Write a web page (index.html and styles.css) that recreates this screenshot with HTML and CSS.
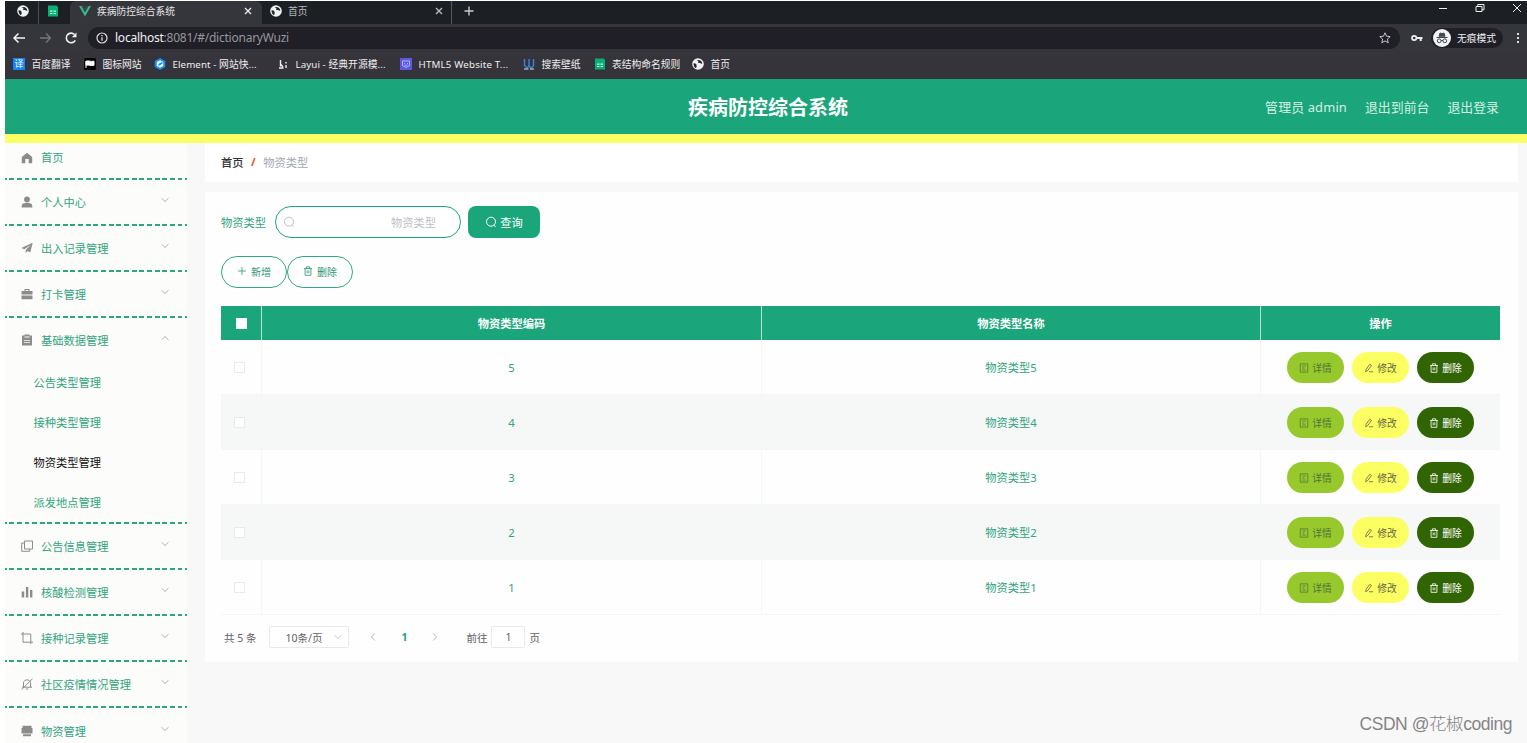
FILE: index.html
```html
<!DOCTYPE html>
<html lang="zh-CN">
<head>
<meta charset="utf-8">
<title>疾病防控综合系统</title>
<link rel="stylesheet" href="styles.css">
</head>
<body>
<svg class="defs" aria-hidden="true">
  <symbol id="globe" viewBox="0 0 12 12"><circle cx="6" cy="6" r="5.8" fill="#f1f2f3"/><path d="M1.600 5.300C3 5 4.600 5.900 4.600 7.200 5 8.600 4.200 9.200 4 10.300 2.300 9.400 1.300 7.400 1.600 5.300Z M5.300 2C8 1.400 10.200 3.400 10.300 5.500 9 6.400 8.500 4.900 7.200 5.100 5.900 5 5.700 4.200 6.500 3.700 6.400 2.800 5.200 3.200 5.300 2Z" fill="#26282c"/></symbol>
  <symbol id="sheet" viewBox="0 0 12 12"><path d="M1 .5h8.500L11 2v9.500H1z" fill="#08b073"/><path d="M3 6.200h2.500M6.500 6.200H9M3 8.500h2.500M6.500 8.500H9" stroke="#c6f4e2" stroke-width="1.200"/></symbol>
  <symbol id="cross" viewBox="0 0 10 10"><path d="M2 2l6 6M8 2l-6 6" stroke="currentColor" stroke-width="1.400" fill="none"/></symbol>
  <symbol id="search" viewBox="0 0 12 12"><circle cx="6" cy="5.700" r="4.500" fill="none" stroke="currentColor"/><path d="M9 9.200l1.500 1.600" stroke="currentColor"/></symbol>
  <symbol id="trash" viewBox="0 0 12 12"><path d="M1.200 3h9.600M4 2.800V1h4v1.800M2.500 3.300v7.900h7v-7.900M5 5.300v3.500M7 5.300v3.500" fill="none" stroke="currentColor"/></symbol>
  <symbol id="doc" viewBox="0 0 12 12"><path d="M1.500 1h9v10h-9zM4 3.500h4M4 6h2.500M4 8.500h4" fill="none" stroke="currentColor" stroke-width=".9"/></symbol>
  <symbol id="pen" viewBox="0 0 12 12"><path d="M2 10.500l.5-3L7 1.500l2 1.500-4.500 6-2.500 1.500M6 10.500h5" fill="none" stroke="currentColor"/></symbol>
  <symbol id="down" viewBox="0 0 10 10"><path d="M1.500 3.200L5 6.500l3.500-3.300" fill="none" stroke="currentColor" stroke-width=".9"/></symbol>
</svg>
<div class="screen">
  <div class="tabs">
    <div class="tab pin"><svg class="i12"><use href="#globe"/></svg></div>
    <div class="tab pin2"><svg class="i12"><use href="#sheet"/></svg></div>
    <div class="tab active"><svg class="i12" viewBox="0 0 12 12"><path d="M0 1h2.500L6 7.200 9.500 1H12L6 11.400z" fill="#41b883"/><path d="M2.500 1h2.200L6 3.300 7.300 1h2.200L6 7.200z" fill="#35495e"/></svg><span>疾病防控综合系统</span><svg class="i10"><use href="#cross"/></svg></div>
    <div class="tab second"><svg class="i12"><use href="#globe"/></svg><span>首页</span><svg class="i10"><use href="#cross"/></svg></div>
    <svg class="plus" viewBox="0 0 10 10"><path d="M5 .5v9M.5 5h9" stroke="#c8cbcc" stroke-width="1.400"/></svg>
    <div class="win">
      <svg class="i10" viewBox="0 0 10 10"><path d="M1 5.500h8" stroke="#eee"/></svg>
      <svg class="i10" viewBox="0 0 10 10"><path d="M1 3.500h6v5H1zM2.800 3.500v-2H9v5.300H7" fill="none" stroke="#eee"/></svg>
      <svg class="i10" viewBox="0 0 10 10"><path d="M1 1l8 8M9 1L1 9" stroke="#eee"/></svg>
    </div>
  </div>
  <div class="tools">
    <svg class="nav" viewBox="0 0 14 14"><path d="M13 7H2M6.500 2.500L2 7l4.500 4.500" fill="none" stroke="#f2f2f2" stroke-width="1.500"/></svg>
    <svg class="nav" viewBox="0 0 14 14"><path d="M2 7h10M8 2.500L12.500 7 8 11.500" fill="none" stroke="#77777a" stroke-width="1.300"/></svg>
    <svg class="nav" viewBox="0 0 14 14"><path d="M11.300 9.300A4.800 4.800 0 1 1 10.500 3.500" fill="none" stroke="#f2f2f2" stroke-width="1.600"/><path d="M12.500 1.500v4.700H7.800z" fill="#f2f2f2"/></svg>
    <div class="address">
      <svg class="i12" viewBox="0 0 12 12"><circle cx="6" cy="6" r="5" fill="none" stroke="#ddd" stroke-width="1.200"/><path d="M6 5.200v3.600M6 3v1.200" stroke="#ddd" stroke-width="1.300"/></svg>
      <span class="url"><b>localhost</b>:8081/#/dictionaryWuzi</span>
      <svg class="i12 star" viewBox="0 0 12 12"><path d="M6 .8l1.500 3.400 3.700.4-2.800 2.500.8 3.700L6 8.900l-3.200 1.900.8-3.700L.8 4.600l3.700-.4z" fill="none" stroke="#c5c5c8"/></svg>
    </div>
    <svg class="i12 key" viewBox="0 0 12 12"><circle cx="3.200" cy="6" r="2.200" fill="none" stroke="#eee" stroke-width="1.700"/><path d="M5.500 6h6M9.700 6v3" stroke="#eee" stroke-width="2"/></svg>
    <div class="incog"><svg viewBox="0 0 18 18"><circle cx="9" cy="9" r="9" fill="#f1f2f5"/><path d="M3.500 8.500h11M6 7.300L7 4l2 .6L11 4l1 3.300z" fill="#44474d" stroke="#44474d"/><circle cx="6.200" cy="11.800" r="1.900" fill="none" stroke="#44474d"/><circle cx="11.800" cy="11.800" r="1.900" fill="none" stroke="#44474d"/><path d="M8 11.500h2" stroke="#44474d"/></svg><span>无痕模式</span></div>
    <svg class="dots" viewBox="0 0 4 12"><path d="M1 1h2v2H1zM1 5h2v2H1zM1 9h2v2H1z" fill="#ddd"/></svg>
  </div>
  <div class="marks">
    <div class="mark m1"><i class="yi">译</i><span>百度翻译</span></div>
    <div class="mark m2"><svg class="i12" viewBox="0 0 12 12"><rect width="12" height="12" rx="1.500" fill="#050505"/><path d="M2 3v7M2 3.200c3-1 4 .8 8 0v4c-4 1-5-.8-8 0z" fill="#fff" stroke="#fff"/></svg><span>图标网站</span></div>
    <div class="mark m3"><svg class="i12" viewBox="0 0 12 12"><path d="M6 0l5.300 3v6L6 12 .7 9V3z" fill="#168bec"/><path d="M6 2.200L9.300 4v4L6 9.800 2.700 8V4z" fill="#e9f5ff"/><path d="M4.500 6l4-2.300v2L4.500 8z" fill="#168bec"/></svg><span>Element - 网站快...</span></div>
    <div class="mark m4"><svg class="i12" viewBox="0 0 12 12"><path d="M3.500 2v6.500M2 10h4.500M3.500 6l2.500 3M9 4v1.500M9 7v3" fill="none" stroke="#eee" stroke-width="1.400"/></svg><span>Layui - 经典开源模...</span></div>
    <div class="mark m5"><svg class="i12" viewBox="0 0 12 12"><rect width="12" height="12" fill="#5c58e4"/><path d="M2.500 3h7v4.500L6 9.500 2.500 7.500zM4.500 5v1M7.500 5v1M4.500 7.200h3" fill="none" stroke="#c7c9ff" stroke-width=".8"/></svg><span>HTML5 Website T...</span></div>
    <div class="mark m6"><svg class="i12" viewBox="0 0 12 12"><path d="M1.500 1v6.500L4 10l2-2V1M6 8l2 2 2.500-2V1" fill="none" stroke="#3b83d7" stroke-width="1.400"/><path d="M1 11h4.500M7 11h4" stroke="#ddd"/></svg><span>搜索壁纸</span></div>
    <div class="mark m7"><svg class="i12"><use href="#sheet"/></svg><span>表结构命名规则</span></div>
    <div class="mark"><svg class="i12"><use href="#globe"/></svg><span>首页</span></div>
  </div>

  <header class="header">
    <h1>疾病防控综合系统</h1>
    <div class="user"><span>管理员 admin</span><span>退出到前台</span><span>退出登录</span></div>
  </header>

  <div class="body">
    <nav class="side">
      <div class="item home"><svg viewBox="0 0 12 12"><path d="M6 .7L.8 5v6.300H4.300V7h3.400v4.300h3.500V5z"/></svg><span>首页</span></div>
      <div class="item"><svg viewBox="0 0 12 12"><circle cx="6" cy="3.500" r="2.900"/><path d="M.7 11.500V9.700C1 7.700 2.500 7 4.500 7h3c2 0 3.500.7 3.800 2.700v1.800z"/></svg><span>个人中心</span><svg class="arr"><use href="#down"/></svg></div>
      <div class="item"><svg viewBox="0 0 12 12"><path d="M11.700.8L.3 6l3 1.300L10 2.800 4.700 8v3.300l1.800-2.200 2.700 1.300z"/></svg><span>出入记录管理</span><svg class="arr"><use href="#down"/></svg></div>
      <div class="item"><svg viewBox="0 0 12 12"><path d="M3.500 3V1h5v2h3v3.500H.5V3zM4.600 3h2.800V2H4.600zM.5 7.500h11v3.800H.5z" fill-rule="evenodd"/></svg><span>打卡管理</span><svg class="arr"><use href="#down"/></svg></div>
      <div class="item open"><svg viewBox="0 0 12 12"><path d="M1 1.500h2.500V.5h5v1H11v10H1zM3.500 3.500h5v-1h-5zM3 6v.8h6V6zM3 8.300v.8h6v-.8z" fill-rule="evenodd"/></svg><span>基础数据管理</span><svg class="arr up"><use href="#down"/></svg></div>
      <div class="subs"><span>公告类型管理</span><span>接种类型管理</span><span class="on">物资类型管理</span><span>派发地点管理</span></div>
      <div class="item"><svg viewBox="0 0 12 12"><path d="M3.500 1h8v8h-8zM3.500 3H.7v8.300h8V9" class="ln"/></svg><span>公告信息管理</span><svg class="arr"><use href="#down"/></svg></div>
      <div class="item"><svg viewBox="0 0 12 12"><path d="M.7 5.500h2.500v6H.7zM4.900 1h2.400v10.500H4.900zM9 4h2.400v7.500H9z"/></svg><span>核酸检测管理</span><svg class="arr"><use href="#down"/></svg></div>
      <div class="item"><svg viewBox="0 0 12 12"><path d="M0 2h9.800v10M2 0v10.200h10" class="ln"/></svg><span>接种记录管理</span><svg class="arr"><use href="#down"/></svg></div>
      <div class="item"><svg viewBox="0 0 12 12"><path d="M2.500 9V4.500C3 1 9 1 9.500 4.500V9M1 9.200h10M11.500.7L.7 11.500M4.800 11h2.500" class="ln"/></svg><span>社区疫情情况管理</span><svg class="arr"><use href="#down"/></svg></div>
      <div class="item"><svg viewBox="0 0 12 12"><path d="M1.500.8h9v2.200h1v5.500h-11V3h1zM2 9.300h8v2H2z"/></svg><span>物资管理</span><svg class="arr"><use href="#down"/></svg></div>
    </nav>

    <main class="main">
      <div class="crumb"><b>首页</b><em>/</em><span>物资类型</span></div>
      <section class="card">
        <div class="filter"><label>物资类型</label>
          <div class="field"><svg class="i12"><use href="#search"/></svg><span>物资类型</span></div>
          <div class="query"><svg class="i12"><use href="#search"/></svg><span>查询</span></div>
        </div>
        <div class="acts">
          <div class="act"><svg class="i10" viewBox="0 0 10 10"><path d="M5 1v8M1 5h8" stroke="currentColor" stroke-width=".8"/></svg><span>新增</span></div>
          <div class="act"><svg class="i10"><use href="#trash"/></svg><span>删除</span></div>
        </div>
        <div class="table">
          <div class="row head"><div><i class="box"></i></div><div>物资类型编码</div><div>物资类型名称</div><div>操作</div></div>
          <div class="row"><div><i class="box"></i></div><div>5</div><div>物资类型5</div><div class="ops"><span class="op view"><svg class="i10"><use href="#doc"/></svg>详情</span><span class="op edit"><svg class="i10"><use href="#pen"/></svg>修改</span><span class="op del"><svg class="i10"><use href="#trash"/></svg>删除</span></div></div>
          <div class="row even"><div><i class="box"></i></div><div>4</div><div>物资类型4</div><div class="ops"><span class="op view"><svg class="i10"><use href="#doc"/></svg>详情</span><span class="op edit"><svg class="i10"><use href="#pen"/></svg>修改</span><span class="op del"><svg class="i10"><use href="#trash"/></svg>删除</span></div></div>
          <div class="row"><div><i class="box"></i></div><div>3</div><div>物资类型3</div><div class="ops"><span class="op view"><svg class="i10"><use href="#doc"/></svg>详情</span><span class="op edit"><svg class="i10"><use href="#pen"/></svg>修改</span><span class="op del"><svg class="i10"><use href="#trash"/></svg>删除</span></div></div>
          <div class="row even"><div><i class="box"></i></div><div>2</div><div>物资类型2</div><div class="ops"><span class="op view"><svg class="i10"><use href="#doc"/></svg>详情</span><span class="op edit"><svg class="i10"><use href="#pen"/></svg>修改</span><span class="op del"><svg class="i10"><use href="#trash"/></svg>删除</span></div></div>
          <div class="row"><div><i class="box"></i></div><div>1</div><div>物资类型1</div><div class="ops"><span class="op view"><svg class="i10"><use href="#doc"/></svg>详情</span><span class="op edit"><svg class="i10"><use href="#pen"/></svg>修改</span><span class="op del"><svg class="i10"><use href="#trash"/></svg>删除</span></div></div>
        </div>
        <div class="pager">
          <span class="total">共 5 条</span>
          <div class="size"><span>10条/页</span><svg class="i10"><use href="#down"/></svg></div>
          <svg class="i10 prev"><use href="#down"/></svg>
          <b>1</b>
          <svg class="i10 next"><use href="#down"/></svg>
          <span class="goto">前往</span><div class="num">1</div><span>页</span>
        </div>
      </section>
    </main>
  </div>
  <div class="mark-text">CSDN @花椒coding</div>
</div>
</body>
</html>
```
FILE: styles.css
```css
* { box-sizing: border-box; }
body {
  margin: 0;
  background: #fff;
  font-family: "Noto Sans", "Noto Sans CJK SC", sans-serif;
  font-size: 11.25px;
  overflow: hidden;
}
svg { flex: none; display: block; }
.defs { position: absolute; width: 0; height: 0; }
.screen {
  position: relative;
  width: 1527px;
  height: 743px;
  padding: 1px 0 0 5px;
  overflow: hidden;
  white-space: nowrap;
}
.i12 { width: 12px; height: 12px; }
.i10 { width: 10px; height: 10px; }

/* browser frame */
.tabs { display: flex; height: 23px; background: #1c2024; color: #e6e6e6; font-size: 9.75px; align-items: stretch; }
.tab { display: flex; align-items: center; padding-bottom: 3px; }
.pin { width: 34px; padding-left: 12px; border-right: 1px solid #4a4d50; }
.pin2 { width: 31px; padding-left: 8px; }
.active { width: 192px; background: #35353c; border-radius: 6px 6px 0 0; padding-left: 9px; }
.second { width: 190px; padding-left: 8px; color: #b8babc; border-right: 1px solid #55585a; }
.tab span { flex: 1; margin-left: 6px; }
.active .i10 { margin-right: 9px; }
.second .i10 { margin-right: 7px; }
.plus { width: 10px; height: 10px; margin: 5px 0 0 12px; }
.win { margin: 2px 5px 0 auto; display: flex; gap: 27px; }
.tools { display: flex; align-items: center; height: 27px; background: #35353c; padding-left: 7px; }
.nav { width: 14px; height: 14px; margin-right: 12px; }
.nav:nth-child(3) { margin-right: 10px; }
.address { width: 1312px; height: 22px; border-radius: 11px; background: #201f27; display: flex; align-items: center; padding: 0 9px 0 8px; }
.url { margin-left: 7px; font-size: 12px; letter-spacing: -.24px; color: #96969b; flex: 1; }
.url b { font-weight: 400; color: #f0f0f0; }
.key { margin-left: 11px; }
.incog { margin-left: 8px; width: 72px; height: 20px; border-radius: 10px; background: #201f27; color: #eee; display: flex; align-items: center; gap: 6px; font-size: 9.75px; }
.incog svg { width: 18px; height: 18px; margin-left: 2px; }
.dots { width: 4px; height: 12px; margin-left: 13px; }
.marks { display: flex; align-items: center; height: 28px; background: #36343b; color: #eee; font-size: 9.75px; padding: 0 0 2px 8px; }
.mark { display: flex; align-items: center; gap: 6.500px; }
.yi { width: 12px; height: 12px; line-height: 12px; font-size: 9px; background: #1683f5; color: #fff; font-style: normal; text-align: center; }
.m1 { width: 71px; }
.m2 { width: 70px; }
.m3 { width: 123px; }
.m4 { width: 123px; }
.m5 { width: 123px; }
.m6 { width: 70.500px; }
.m7 { width: 98.500px; }
.m5 span { letter-spacing: .18px; }
.m3 span, .m4 span { letter-spacing: .08px; }

/* application header */
.header { height: 64px; background: #1aa67a; border-bottom: 9px solid #fbff66; display: grid; grid-template-columns: 1fr auto 1fr; align-items: center; padding-right: 28px; padding-left: 32px; color: #fff; }
.header h1 { margin: 2px 0 0; grid-column: 2; font-size: 20px; line-height: 28px; }
.user { display: flex; justify-content: flex-end; gap: 18px; font-size: 12.9px; color: #d5f0e4; }
.user span:first-child { letter-spacing: .15px; }

.body { display: flex; height: 600px; background: #f9f8f8; }
.side { width: 182px; background: #fcfcfa; color: #31a47d; }
.item, .subs {
  background: repeating-linear-gradient(90deg, #2ba67f 0 1.500px, transparent 1.500px 4.200px, #2ba67f 4.200px 7.650px) left bottom / 100% 2px no-repeat;
}
.item {
  height: 46.2px;
  padding: 0 17px 2px 16px;
  display: flex;
  align-items: center;
  gap: 8px;
}
.item svg { width: 12px; height: 12px; fill: #8c8c8a; }
.item .ln { fill: none; stroke: #8c8c8a; stroke-width: 1; }
.item .arr { width: 10px; height: 10px; margin-left: auto; margin-bottom: 4px; color: #a4a8a6; }
.item .up { transform: rotate(180deg); }
.home { height: 36.500px; padding-bottom: 8px; }
.home svg { margin-top: 2px; }
.home span { margin-top: -1px; }
.open { background: none; height: 44.600px; padding-bottom: 0; }
.subs { display: flex; flex-direction: column; padding-left: 28.500px; height: 161px; }
.subs span { height: 40px; line-height: 40px; }
.subs .on { color: #111; }

.main { margin-left: 18px; width: 1313px; }
.crumb { height: 39px; background: #fff; padding: 0 0 2px 16px; display: flex; align-items: center; gap: 7.500px; color: #a2a8b5; }
.crumb b { color: #303133; font-weight: 500; }
.crumb em { color: #e8502c; font-weight: 700; font-style: normal; }
.card { margin-top: 10px; height: 470px; background: #fefefe; padding: 14px 18px 0 16px; }
.filter { display: flex; align-items: center; height: 32px; color: #31a47d; }
.field { margin-left: 9px; width: 186px; height: 32px; border: 1px solid #1aa67a; border-radius: 16px; display: flex; align-items: center; justify-content: space-between; padding: 0 24px 0 7px; color: #bcbfc6; background: #fff; }
.query { margin-left: 7px; width: 72px; height: 32px; border-radius: 8px; background: #1aa67a; color: #fff; display: flex; align-items: center; justify-content: center; gap: 3px; }
.acts { display: flex; margin-top: 18px; }
.act { width: 66px; height: 32px; border: 1px solid #31a985; border-radius: 16px; display: flex; align-items: center; justify-content: center; gap: 4px; padding-bottom: 2px; font-size: 10px; color: #31947a; }
.table { margin-top: 18px; }
.row { display: grid; grid-template-columns: 41px 500px 499px 239px; height: 55px; color: #31a47d; background: #fefefe; }
.row > div { display: flex; align-items: center; justify-content: center; border-right: 1px solid #f4f7f8; border-bottom: 1px solid #f5f5f7; }
.row.even { background: #f6f7f7; }
.row.head { height: 34px; background: #1aa67a; color: #fff; font-weight: 700; }
.row.head > div { border-bottom: 0; border-right-color: #b8e2d4; }
.row.head > div:last-child, .row > div:last-child { border-right: 0; }
.box { width: 11px; height: 11px; background: #fff; border: 1px solid #e9eaec; margin-right: 3px; }
.head .box { border-color: #fff; margin-right: 0; }
.row .ops { gap: 8px; padding-top: 1px; }
.op { width: 57px; height: 31px; border-radius: 16px; display: flex; align-items: center; justify-content: center; gap: 3px; font-size: 9.75px; }
.view { background: #97c92c; color: #52713a; }
.edit { background: #fcff62; color: #666648; }
.del { background: #316503; color: #fff; }
.pager { display: flex; align-items: center; height: 22px; margin-top: 12px; padding: 0 0 2px 3px; font-size: 10.500px; color: #606266; }
.size { margin-left: 13px; width: 80px; height: 22px; border: 1px solid #e9e9eb; border-radius: 2px; display: flex; align-items: center; justify-content: space-between; padding: 0 5px 0 15px; background: #fff; }
.size svg { color: #c0c4cc; }
.prev { margin: 0 23px 0 19px; transform: rotate(90deg); color: #a8abb0; }
.next { margin: 0 26px 0 23px; transform: rotate(-90deg); color: #a8abb0; }
.pager b { color: #1aa67a; }
.num { width: 34px; height: 22px; border: 1px solid #e9e9eb; border-radius: 2px; margin: 0 4px; display: flex; align-items: center; justify-content: center; background: #fff; }

.mark-text { position: absolute; right: 15px; bottom: 7px; font-family: "Liberation Sans", "Noto Sans CJK SC", sans-serif; font-size: 17.500px; letter-spacing: -.45px; line-height: 24px; font-weight: 300; color: #858587; }
```
